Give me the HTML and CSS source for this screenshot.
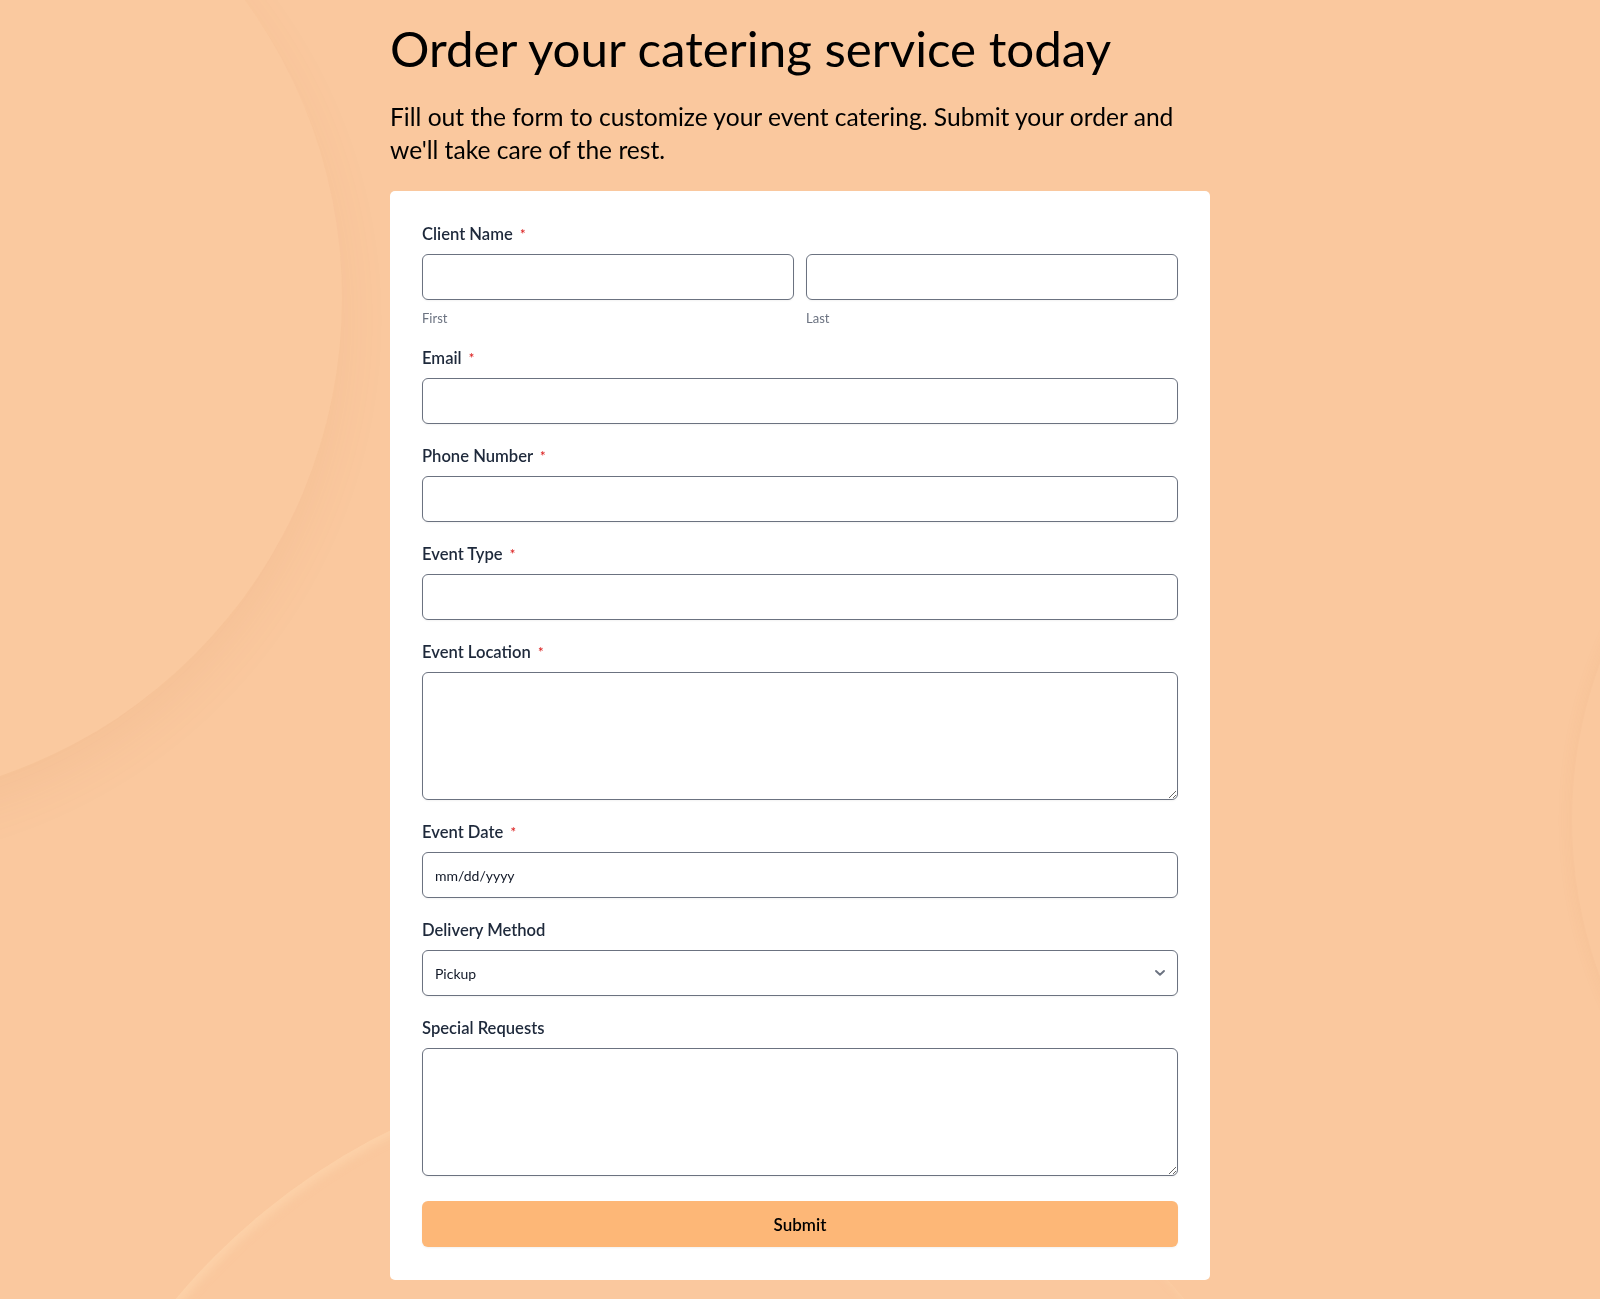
FILE: index.html
```html
<!DOCTYPE html>
<html lang="en">
<head>
<meta charset="utf-8">
<title>Order your catering service today</title>
<link rel="stylesheet" href="styles.css">
</head>
<body>
<div class="decor" aria-hidden="true">
  <div class="bg-shape shape-a"></div>
  <div class="bg-shape shape-b"></div>
  <div class="bg-shape shape-c"></div>
</div>
<main class="page">
  <h1 class="title">Order your catering service today</h1>
  <p class="lead">Fill out the form to customize your event catering. Submit your order and we'll take care of the rest.</p>
  <form class="card">
    <div class="field">
      <label class="label">Client Name <span class="req">*</span></label>
      <div class="name-row">
        <div class="name-col">
          <input class="input" type="text">
          <span class="sub">First</span>
        </div>
        <div class="name-col">
          <input class="input" type="text">
          <span class="sub">Last</span>
        </div>
      </div>
    </div>
    <div class="field">
      <label class="label">Email <span class="req">*</span></label>
      <input class="input" type="email">
    </div>
    <div class="field">
      <label class="label">Phone Number <span class="req">*</span></label>
      <input class="input" type="tel">
    </div>
    <div class="field">
      <label class="label">Event Type <span class="req">*</span></label>
      <input class="input" type="text">
    </div>
    <div class="field">
      <label class="label">Event Location <span class="req">*</span></label>
      <textarea class="input textarea"></textarea>
    </div>
    <div class="field">
      <label class="label">Event Date <span class="req">*</span></label>
      <input class="input" type="text" placeholder="mm/dd/yyyy">
    </div>
    <div class="field">
      <label class="label">Delivery Method</label>
      <div class="select-wrap">
        <select class="input select">
          <option>Pickup</option>
          <option>Delivery</option>
        </select>
        <svg class="chevron" width="12" height="8" viewBox="0 0 12 8" aria-hidden="true"><path d="M2 2 L6 5.8 L10 2" fill="none" stroke="#6b7280" stroke-width="1.9" stroke-linecap="round" stroke-linejoin="round"/></svg>
      </div>
    </div>
    <div class="field">
      <label class="label">Special Requests</label>
      <textarea class="input textarea"></textarea>
    </div>
    <button class="submit" type="button">Submit</button>
  </form>
</main>
</body>
</html>
```
FILE: styles.css
```css
* { box-sizing: border-box; }

html, body {
  margin: 0;
  padding: 0;
}

body {
  background: #fac89e;
  font-family: Lato, "Noto Sans", "Liberation Sans", sans-serif;
  color: #000;
}

.decor {
  position: fixed;
  inset: 0;
  overflow: hidden;
  pointer-events: none;
}

.bg-shape {
  position: absolute;
  border-radius: 50%;
}

.shape-a {
  left: -668px;
  top: -207px;
  width: 1010px;
  height: 1010px;
  background: #fac99f;
  box-shadow: 0 22px 50px rgba(190, 120, 60, 0.08);
}

.shape-b {
  left: 23px;
  top: 1063px;
  width: 1314px;
  height: 1314px;
  background: #fac89e;
  box-shadow: inset 5px 4px 8px rgba(255, 216, 176, 0.55);
}

.shape-c {
  left: 1572px;
  top: 420px;
  width: 700px;
  height: 800px;
  background: #fac89e;
  box-shadow: -4px 0 14px rgba(190, 120, 60, 0.05);
}

.page {
  position: relative;
  width: 820px;
  margin: 0 auto;
  padding-top: 18px;
  padding-bottom: 18px;
}

.title {
  margin: 0;
  font-size: 49.3px;
  font-weight: 400;
  line-height: 60px;
}

.lead {
  margin: 22px 0 25px;
  font-size: 24.6px;
  line-height: 33px;
}

.card {
  background: #fff;
  border-radius: 5px;
  padding: 31px 32px 33px;
  display: flex;
  flex-direction: column;
}

.field {
  display: flex;
  flex-direction: column;
  margin-bottom: 20px;
}

.label {
  font-size: 16.6px;
  font-weight: 600;
  color: #1e293b;
  line-height: 24px;
  margin-bottom: 8px;
}

.req {
  color: #dc2626;
  font-size: 13px;
  margin-left: 3px;
  vertical-align: 1px;
}

.name-row {
  display: grid;
  grid-template-columns: 1fr 1fr;
  gap: 12px;
}

.name-col {
  display: flex;
  flex-direction: column;
}

.sub {
  margin-top: 10px;
  font-size: 13px;
  line-height: 16px;
  color: #6b7280;
}

.input {
  display: block;
  width: 100%;
  height: 46px;
  border: 1px solid #6b7280;
  border-radius: 6px;
  background: #fff;
  padding: 0 12px;
  font-family: Lato, "Noto Sans", sans-serif;
  font-size: 14px;
  color: #111827;
  box-shadow: 0 1px 2px rgba(0, 0, 0, 0.05);
  outline: none;
}

.input::placeholder {
  color: #111827;
  opacity: 1;
}

.textarea {
  height: 128px;
  padding: 10px 12px;
  resize: vertical;
}

.select-wrap {
  position: relative;
}

.select {
  appearance: none;
  -webkit-appearance: none;
}

.chevron {
  position: absolute;
  right: 12px;
  top: 19px;
}

.submit {
  margin-top: 5px;
  height: 46px;
  width: 100%;
  border: none;
  border-radius: 6px;
  background: #fdb777;
  color: #000;
  font-family: Lato, "Noto Sans", sans-serif;
  font-size: 17px;
  font-weight: 600;
  box-shadow: 0 1px 2px rgba(0, 0, 0, 0.05);
}
```
